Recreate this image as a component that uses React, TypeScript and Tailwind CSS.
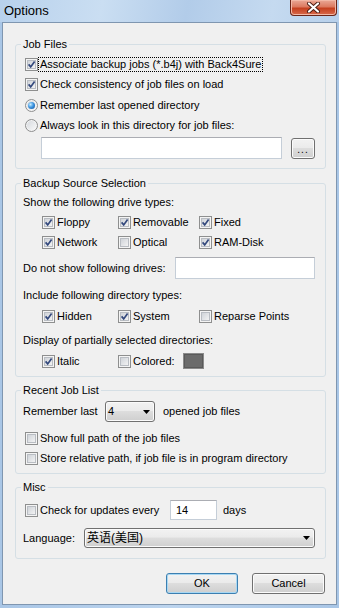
import React from "react";

type CheckProps = {
  label: string;
  checked?: boolean;
  focus?: boolean;
  className?: string;
};

function CheckBox({ checked = false }: { checked?: boolean }) {
  return (
    <span className="w-[13px] h-[13px] shrink-0 border border-[#8e8f8f] bg-[#f4f4f4] p-px flex">
      <span className="flex-1 flex items-center justify-center bg-[linear-gradient(135deg,#cbcfd5,#f7f7f7)] shadow-[inset_0_0_0_1px_#b9bdc3]">
        {checked && (
          <svg width="9" height="9" viewBox="0 0 9 9">
            <path d="M1.6 4.4L3.7 6.9L7.6 1.6" fill="none" stroke="#34497d" strokeWidth="1.7" />
          </svg>
        )}
      </span>
    </span>
  );
}

function Label({ text, focus = false }: { text: string; focus?: boolean }) {
  return (
    <span
      className={`ml-0 px-px leading-[13px] whitespace-nowrap border border-dotted ${
        focus ? "border-black" : "border-transparent"
      }`}
    >
      {text}
    </span>
  );
}

function Check({ label, checked = false, focus = false, className = "" }: CheckProps) {
  return (
    <div className={`h-5 flex items-center ${className}`}>
      <CheckBox checked={checked} />
      <Label text={label} focus={focus} />
    </div>
  );
}

function Radio({ label, checked = false, className = "" }: CheckProps) {
  return (
    <div className={`h-5 flex items-center ${className}`}>
      <span className="w-[13px] h-[13px] shrink-0 rounded-full border border-[#8e8f8f] bg-[linear-gradient(135deg,#d3d7dc,#fbfbfb)] shadow-[inset_0_0_0_1px_#f3f3f3] flex items-center justify-center">
        {checked && (
          <span className="w-[7px] h-[7px] rounded-full bg-[radial-gradient(circle_at_35%_35%,#c9edff_0%,#3f97e2_45%,#0d4b96_100%)]" />
        )}
      </span>
      <Label text={label} />
    </div>
  );
}

function TextBox({ value = "", className = "" }: { value?: string; className?: string }) {
  return (
    <div
      className={`bg-white border border-[#c5ced8] border-t-[#abadb3] flex items-center pl-[5px] ${className}`}
    >
      {value}
    </div>
  );
}

function Button({
  children,
  isDefault = false,
  className = "",
}: {
  children: React.ReactNode;
  isDefault?: boolean;
  className?: string;
}) {
  return (
    <div
      className={`rounded-[3px] border flex items-center justify-center bg-[linear-gradient(#f2f2f2,#ebebeb_45%,#dddddd_50%,#cfcfcf)] ${
        isDefault
          ? "border-[#3c7fb1] shadow-[inset_0_0_0_1px_#a9d8f3]"
          : "border-[#707070] shadow-[inset_0_0_0_1px_#fbfbfb]"
      } ${className}`}
    >
      {children}
    </div>
  );
}

function Combo({ value, className = "" }: { value: string; className?: string }) {
  return (
    <div
      className={`rounded-[3px] border border-[#707070] flex items-center pl-[2px] pr-[4px] bg-[linear-gradient(#f2f2f2,#ebebeb_45%,#dddddd_50%,#cfcfcf)] shadow-[inset_0_0_0_1px_#fbfbfb] ${className}`}
    >
      <span className="flex-1 whitespace-nowrap">{value}</span>
      <svg width="7" height="4" viewBox="0 0 7 4">
        <path d="M0 0H7L3.5 4Z" fill="#000" />
      </svg>
    </div>
  );
}

function Group({
  title,
  className = "",
  children,
}: {
  title: string;
  className?: string;
  children: React.ReactNode;
}) {
  return (
    <fieldset className={`border border-[#d5dfe5] rounded-[3px] pl-[7px] pr-[10px] ${className}`}>
      <legend className="ml-[-2px] px-[2px] leading-[14px]">{title}</legend>
      {children}
    </fieldset>
  );
}

function CloseButton() {
  return (
    <div className="ml-auto mr-[2px] w-[47px] h-[16px] rounded-b-[4px] border border-t-0 border-[#6b2518] bg-[linear-gradient(#eaa896,#dc7a60_45%,#c5401f_55%,#d86a4c)] shadow-[inset_0_0_0_1px_#f2b8a6] flex items-center justify-center">
      <svg width="15" height="11" viewBox="0 0 15 11">
        <path d="M3 1.5L12 9.5M12 1.5L3 9.5" stroke="#4a1c12" strokeWidth="4" strokeLinecap="round" />
        <path d="M3 1.5L12 9.5M12 1.5L3 9.5" stroke="#ffffff" strokeWidth="2.2" strokeLinecap="round" />
      </svg>
    </div>
  );
}

export default function App() {
  return (
    <div className="w-[339px] h-[608px] overflow-hidden flex flex-col bg-[linear-gradient(90deg,#a9c6e6,#bcd4ee_50%,#a9c6e6)] text-[11px] text-black font-['Liberation_Sans','Noto_Sans_CJK_SC',sans-serif]">
      {/* title bar */}
      <div className="h-[22px] shrink-0 flex items-start bg-[linear-gradient(100deg,#b8d1ec_0%,#cadef2_30%,#b2cce9_55%,#c5daf0_80%,#b7d0eb_100%)]">
        <span className="ml-[4px] mt-[2px] text-[13px] leading-[17px]">Options</span>
        <CloseButton />
      </div>

      {/* client area */}
      <div className="flex-1 mx-[2px] mb-[3px] border border-[#7f96b0] bg-[#f0f0f0] flex flex-col pl-[12px] pr-[10px]">
        <Group title="Job Files" className="mt-[14px] pt-[3px] pb-[9px]">
          <Check checked focus label="Associate backup jobs (*.b4j) with Back4Sure" className="ml-[2px]" />
          <Check checked label="Check consistency of job files on load" className="ml-[2px]" />
          <Radio checked label="Remember last opened directory" className="ml-[2px] mt-px" />
          <Radio label="Always look in this directory for job files:" className="ml-[2px]" />
          <div className="flex items-center mt-[2px]">
            <TextBox className="ml-[18px] w-[241px] h-[22px]" />
            <Button className="ml-[9px] w-[24px] h-[21px]">
              <span className="text-[10px] leading-none mt-[3px] tracking-[1px]">...</span>
            </Button>
          </div>
        </Group>

        <Group title="Backup Source Selection" className="mt-[7px] pt-[3px] pb-[5px]">
          <div className="h-[19px] flex items-center">Show the following drive types:</div>
          <div className="h-5 flex items-center ml-[19px]">
            <Check checked label="Floppy" className="w-[76px]" />
            <Check checked label="Removable" className="w-[81px]" />
            <Check checked label="Fixed" />
          </div>
          <div className="h-5 flex items-center ml-[19px]">
            <Check checked label="Network" className="w-[76px]" />
            <Check label="Optical" className="w-[81px]" />
            <Check checked label="RAM-Disk" />
          </div>
          <div className="h-[22px] mt-[5px] flex items-center">
            <span>Do not show following drives:</span>
            <TextBox className="ml-auto w-[140px] h-[22px]" />
          </div>
          <div className="h-5 mt-[6px] flex items-center">Include following directory types:</div>
          <div className="h-5 mt-px flex items-center ml-[19px]">
            <Check checked label="Hidden" className="w-[76px]" />
            <Check checked label="System" className="w-[81px]" />
            <Check label="Reparse Points" />
          </div>
          <div className="h-5 mt-[4px] flex items-center">Display of partially selected directories:</div>
          <div className="h-5 mt-px flex items-center ml-[19px]">
            <Check checked label="Italic" className="w-[76px]" />
            <Check label="Colored:" className="w-[65px]" />
            <div className="w-[21px] h-[16px] border border-[#8a8a8a] bg-[#6b6b6b] shadow-[inset_0_0_0_1px_#5a5a5a]" />
          </div>
        </Group>

        <Group title="Recent Job List" className="mt-[6px] pt-[4px] pb-[5px]">
          <div className="h-[21px] flex items-center">
            <span className="w-[82px] shrink-0">Remember last</span>
            <Combo value="4" className="w-[50px] h-[21px]" />
            <span className="ml-[8px]">opened job files</span>
          </div>
          <Check label="Show full path of the job files" className="ml-[2px] mt-[6px]" />
          <Check label="Store relative path, if job file is in program directory" className="ml-[2px]" />
        </Group>

        <Group title="Misc" className="mt-[6px] pt-[6px] pb-[10px]">
          <div className="h-5 flex items-center">
            <Check label="Check for updates every" className="ml-[2px] w-[145px]" />
            <TextBox value="14" className="w-[47px] h-5" />
            <span className="ml-[6px]">days</span>
          </div>
          <div className="h-5 mt-[8px] flex items-center">
            <span className="w-[61px] shrink-0">Language:</span>
            <Combo value="英语(美国)" className="flex-1 h-5 text-[12px]" />
          </div>
        </Group>

        <div className="mt-[14px] flex justify-end gap-[14px] pr-px">
          <Button isDefault className="w-[72px] h-[21px]">OK</Button>
          <Button className="w-[73px] h-[21px]">Cancel</Button>
        </div>
      </div>
    </div>
  );
}
